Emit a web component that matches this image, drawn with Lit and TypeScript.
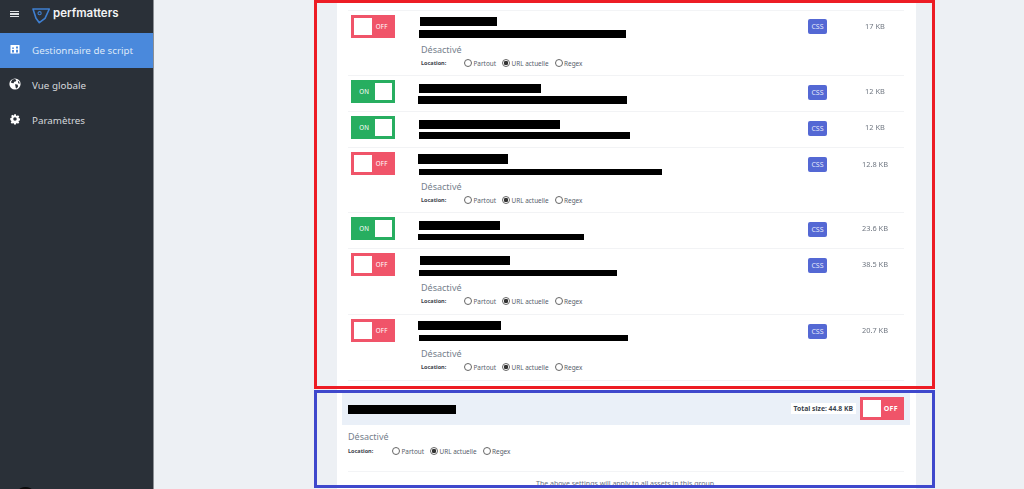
import { LitElement, html, css, svg } from "lit";
import { customElement } from "lit/decorators.js";

type Bar = [number, number, number]; // left offset, width, height
interface Row {
  on: boolean;
  h: number;
  t: number; // top of first bar
  a: Bar;
  gap: number;
  b: Bar;
  size: string;
  sizeTop: number;
  badgeTop: number;
}

const rows: Row[] = [
  { on: false, h: 65, t: 6, a: [1, 77, 9], gap: 4, b: [0, 207, 8], size: "17 KB", sizeTop: 10, badgeTop: 8 },
  { on: true, h: 36, t: 8, a: [0, 122, 9], gap: 3, b: [-1, 209, 8], size: "12 KB", sizeTop: 10, badgeTop: 9 },
  { on: true, h: 36, t: 8, a: [0, 141, 9], gap: 3, b: [0, 211, 7], size: "12 KB", sizeTop: 10, badgeTop: 9 },
  { on: false, h: 65, t: 6, a: [-1, 90, 10], gap: 5, b: [0, 243, 6], size: "12.8 KB", sizeTop: 11, badgeTop: 9 },
  { on: true, h: 36, t: 8, a: [0, 81, 9], gap: 4, b: [-1, 166, 6], size: "23.6 KB", sizeTop: 10, badgeTop: 9 },
  { on: false, h: 66, t: 7, a: [1, 90, 9], gap: 5, b: [0, 198, 6], size: "38.5 KB", sizeTop: 10, badgeTop: 9 },
  { on: false, h: 66, t: 6, a: [-1, 83, 9], gap: 5, b: [0, 209, 6], size: "20.7 KB", sizeTop: 10, badgeTop: 9 },
];

const navIcons = {
  dash: svg`<path fill="#fff" fill-rule="evenodd" d="M2.5 3h9v8.5h-9zM4 8v2.5h2V8zM4 5.5v1.2h2V5.5zM8 4.5v2h2v-2zM8 7.7v2.8h2V7.7z"/>`,
  globe: svg`<circle cx="7" cy="7" r="5.6" fill="#fff"/><path fill="#2a3038" d="M4.4 2.6 7 2l1.4 1.2-.8 1.4-1.4.2-.6 1.4L3.8 6l-1-.8zM7 7.2l2.4.4.8 1.6-1.4 2.2-1-.4-.4-2zM9.8 3.6l1.5 1.5.5 1.7-1.6-.5z"/>`,
  gear: svg`<g transform="translate(1.6 1.6) scale(.77)"><path fill="#fff" fill-rule="evenodd" d="M5.8 1h2.4l.3 1.7 1 .4 1.4-1 1.7 1.7-1 1.4.4 1 1.5.3v2.4l-1.5.3-.4 1 1 1.4-1.7 1.7-1.4-1-1 .4-.3 1.6H5.8l-.3-1.6-1-.4-1.4 1-1.7-1.7 1-1.4-.4-1L.9 8.2V5.8l1.6-.3.4-1-1-1.4 1.7-1.7 1.4 1 1-.4zM7 4.7a2.3 2.3 0 1 0 0 4.6 2.3 2.3 0 0 0 0-4.6z"/></g>`,
};

@customElement("app-root")
export class AppRoot extends LitElement {
  static styles = css`
    :host {
      display: flex;
      position: relative;
      width: 1024px;
      height: 489px;
      overflow: hidden;
      background: #edf0f4;
      font-family: "Noto Sans", "Open Sans", sans-serif;
    }
    .side {
      flex: none;
      width: 153px;
      background: #2a3038;
      color: #e4e7ea;
      border-right: 1px solid #8b8f94;
      box-sizing: content-box;
      position: relative;
    }
    .brand {
      display: flex;
      align-items: center;
      height: 33px;
      padding-left: 10px;
      box-sizing: border-box;
    }
    .burger {
      width: 9px;
      height: 6px;
      margin-top: -6px;
      margin-right: 13px;
      background: linear-gradient(#dfe2e5 0 1.3px, transparent 1.3px 2.4px, #dfe2e5 2.4px 3.6px, transparent 3.6px 4.8px, #dfe2e5 4.8px);
    }
    .logo {
      margin-top: -3px;
      margin-right: 1px;
    }
    .brand-name {
      font-family: "Inter", "Lato", sans-serif;
      font-size: 11.5px;
      font-weight: 600;
      color: #f3f4f5;
      margin-top: -7px;
    }
    .nav {
      display: flex;
      align-items: center;
      height: 35px;
      padding-left: 8px;
      gap: 10px;
      font-size: 9.8px;
      color: #d5d8dc;
    }
    .nav.active {
      height: 34.5px;
      background: #4a89dc;
      color: #dce8f8;
    }
    .nav svg {
      flex: none;
      margin-top: -2px;
    }
    .blob {
      position: absolute;
      left: 19px;
      top: 487px;
      width: 13px;
      height: 6px;
      border-radius: 50%;
      background: #0b0b0b;
    }
    .main {
      flex: 1;
      padding-left: 183px;
    }
    .panel {
      width: 579px;
      height: 489px;
      background: #fff;
      padding-top: 10px;
      box-sizing: border-box;
    }
    .list {
      margin: 0 12px 0 11px;
      border-top: 1px solid #f3f4f6;
    }
    .row {
      display: grid;
      grid-template-columns: 71px 389px 19px 19px 58px;
      border-bottom: 1px solid #f2f3f5;
      box-sizing: border-box;
    }
    .tg {
      display: flex;
      align-items: center;
      width: 44px;
      height: 23px;
      padding: 3px;
      box-sizing: border-box;
      color: #fff;
      font-size: 6.2px;
      font-weight: 400;
      letter-spacing: 0.3px;
    }
    .tg i {
      display: block;
      width: 17.5px;
      height: 17px;
      background: #fff;
    }
    .tg span {
      flex: 1;
      text-align: center;
    }
    .tg.off {
      background: #f05469;
    }
    .tg.on {
      background: #27ae60;
      flex-direction: row-reverse;
    }
    .row > .tg {
      margin: 4px 0 0 3px;
    }
    .band .tg {
      font-size: 7px;
      font-weight: 700;
    }
    .bar {
      background: #000;
    }
    .state {
      font-size: 9px;
      line-height: 12px;
      color: #75808c;
    }
    .loc {
      display: flex;
      align-items: center;
      height: 10px;
      font-size: 6.4px;
      color: #56606b;
    }
    .loc b {
      width: 43px;
      font-size: 5.5px;
      font-weight: 700;
      color: #39424c;
    }
    .opt {
      display: flex;
      align-items: center;
      gap: 1.5px;
      margin-right: 6px;
    }
    .radio {
      width: 8px;
      height: 8px;
      border: 0.8px solid #666;
      border-radius: 50%;
      box-sizing: border-box;
      background: #fff;
    }
    .radio.sel {
      background: radial-gradient(circle, #333 0 2px, #fff 2.4px);
    }
    .badge {
      width: 19px;
      height: 15px;
      border-radius: 2px;
      background: #5468d4;
      color: #e3e7fa;
      font-size: 7px;
      line-height: 15px;
      text-align: center;
    }
    .size {
      font-size: 7.4px;
      line-height: 10px;
      color: #6f7680;
      text-align: center;
      white-space: nowrap;
      will-change: opacity;
    }
    .group {
      margin: 11px 0 0 5px;
    }
    .band {
      display: flex;
      align-items: center;
      width: 568px;
      height: 33px;
      padding: 0 6px;
      box-sizing: border-box;
      background: #eaf0f8;
    }
    .band .bar {
      width: 108px;
      height: 9px;
      margin-top: 1px;
    }
    .total {
      margin-left: auto;
      margin-right: 4px;
      padding: 0 3px;
      height: 11px;
      line-height: 11px;
      background: #fff;
      font-size: 6.8px;
      font-weight: 700;
      color: #3b444e;
    }
    .gbody {
      padding: 6px 6px 0;
      width: 556px;
    }
    .gbody .loc b {
      width: 44px;
    }
    .gbody .loc {
      margin-top: 3px;
    }
    .sep {
      margin-top: 15px;
      border-top: 1px solid #f3f4f6;
    }
    .note {
      margin-top: 7px;
      text-align: center;
      font-size: 7px;
      line-height: 10px;
      color: #6b7280;
    }
    .mark {
      position: absolute;
      box-sizing: border-box;
      left: 314px;
      width: 621px;
      border: 3px solid;
      pointer-events: none;
    }
    .mark.red {
      top: 0;
      height: 389px;
      border-color: #ed1c24;
    }
    .mark.blue {
      top: 390px;
      height: 98px;
      border-color: #3f48cc;
    }
  `;

  private toggle(on: boolean) {
    return html`<div class="tg ${on ? "on" : "off"}"><i></i><span>${on ? "ON" : "OFF"}</span></div>`;
  }

  private location() {
    return html`<div class="loc">
      <b>Location:</b>
      <span class="opt"><span class="radio"></span>Partout</span>
      <span class="opt"><span class="radio sel"></span>URL actuelle</span>
      <span class="opt"><span class="radio"></span>Regex</span>
    </div>`;
  }

  private row(r: Row) {
    const used = r.t + r.a[2] + r.gap + r.b[2];
    return html`<div class="row" style="height:${r.h}px">
      ${this.toggle(r.on)}
      <div>
        <div class="bar" style="margin-top:${r.t}px;margin-left:${r.a[0]}px;width:${r.a[1]}px;height:${r.a[2]}px"></div>
        <div class="bar" style="margin-top:${r.gap}px;margin-left:${r.b[0]}px;width:${r.b[1]}px;height:${r.b[2]}px"></div>
        ${r.on
          ? ""
          : html`<div class="state" style="margin:${33 - used}px 0 2px 2px">Désactivé</div>
              <div style="margin-left:2px">${this.location()}</div>`}
      </div>
      <div class="badge" style="margin-top:${r.badgeTop}px">CSS</div>
      <div></div>
      <div class="size" style="margin-top:${r.sizeTop}px">${r.size}</div>
    </div>`;
  }

  render() {
    return html`
      <aside class="side">
        <div class="brand">
          <span class="burger"></span>
          <svg class="logo" width="20" height="18" viewBox="0 0 20 18">
            <path fill="none" stroke="#3f7fd0" stroke-width="1.6" stroke-linejoin="round" d="M1 3H17.3L13 12.3 7.3 16.7 4 12.3Z"/>
            <circle cx="7.6" cy="7.2" r="1.6" fill="none" stroke="#3f7fd0" stroke-width="1.1"/>
          </svg>
          <span class="brand-name">perfmatters</span>
        </div>
        <div class="nav active"><svg width="14" height="14" viewBox="0 0 14 14">${navIcons.dash}</svg>Gestionnaire de script</div>
        <div class="nav"><svg width="14" height="14" viewBox="0 0 14 14">${navIcons.globe}</svg>Vue globale</div>
        <div class="nav"><svg width="14" height="14" viewBox="0 0 14 14">${navIcons.gear}</svg>Paramètres</div>
        <span class="blob"></span>
      </aside>
      <main class="main">
        <section class="panel">
          <div class="list">${rows.map((r) => this.row(r))}</div>
          <div class="group">
            <div class="band">
              <div class="bar"></div>
              <span class="total">Total size: 44.8 KB</span>
              ${this.toggle(false)}
            </div>
            <div class="gbody">
              <div class="state">Désactivé</div>
              ${this.location()}
              <div class="sep"></div>
              <div class="note">The above settings will apply to all assets in this group.</div>
            </div>
          </div>
        </section>
      </main>
      <div class="mark red"></div>
      <div class="mark blue"></div>
    `;
  }
}
